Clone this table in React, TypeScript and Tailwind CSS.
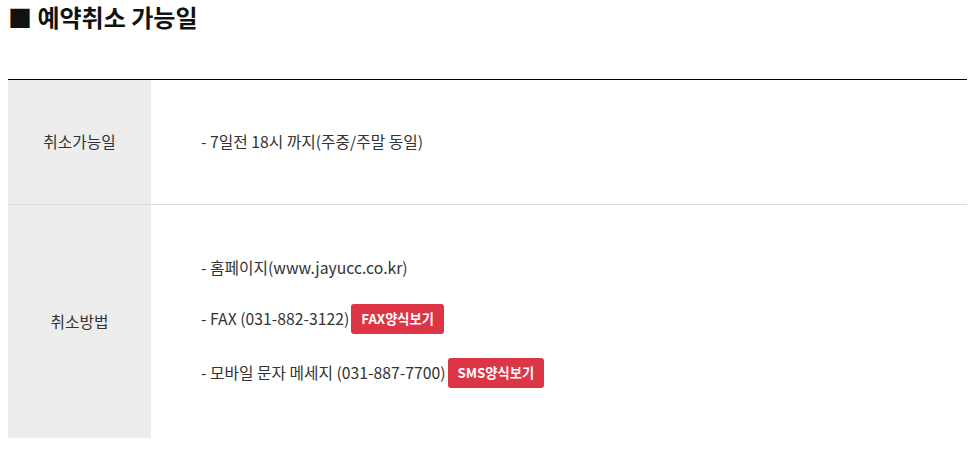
export default function App() {
  return (
    <div className="bg-white px-2 text-[#333] font-['Noto_Sans_CJK_KR','Noto_Sans',sans-serif]">
      <h2 className="text-[24px] font-bold leading-[34px] text-[#111]">■ 예약취소 가능일</h2>
      <div className="mt-[45px] border-t border-black">
        <div className="flex border-b border-[#dddddd]">
          <div className="flex h-[124px] w-[143px] shrink-0 items-center justify-center bg-[#ededed] text-[15.75px]">
            취소가능일
          </div>
          <div className="flex items-center pl-[50px] text-[15.75px]">- 7일전 18시 까지(주중/주말 동일)</div>
        </div>
        <div className="flex">
          <div className="flex h-[233px] w-[143px] shrink-0 items-center justify-center bg-[#ededed] text-[15.75px]">
            취소방법
          </div>
          <div className="flex flex-col justify-center gap-[24px] pl-[50px] text-[15.75px]">
            <p className="leading-[24px]">- 홈페이지(www.jayucc.co.kr)</p>
            <p className="flex items-center gap-[2px] leading-[24px]">
              - FAX (031-882-3122)
              <button className="h-[30px] rounded-[3px] bg-[#dc3545] px-[10px] text-[13.25px] font-bold text-white">FAX양식보기</button>
            </p>
            <p className="flex items-center gap-[2px] leading-[24px]">
              - 모바일 문자 메세지 (031-887-7700)
              <button className="h-[30px] rounded-[3px] bg-[#dc3545] px-[10px] text-[13.25px] font-bold text-white">SMS양식보기</button>
            </p>
          </div>
        </div>
      </div>
    </div>
  );
}
